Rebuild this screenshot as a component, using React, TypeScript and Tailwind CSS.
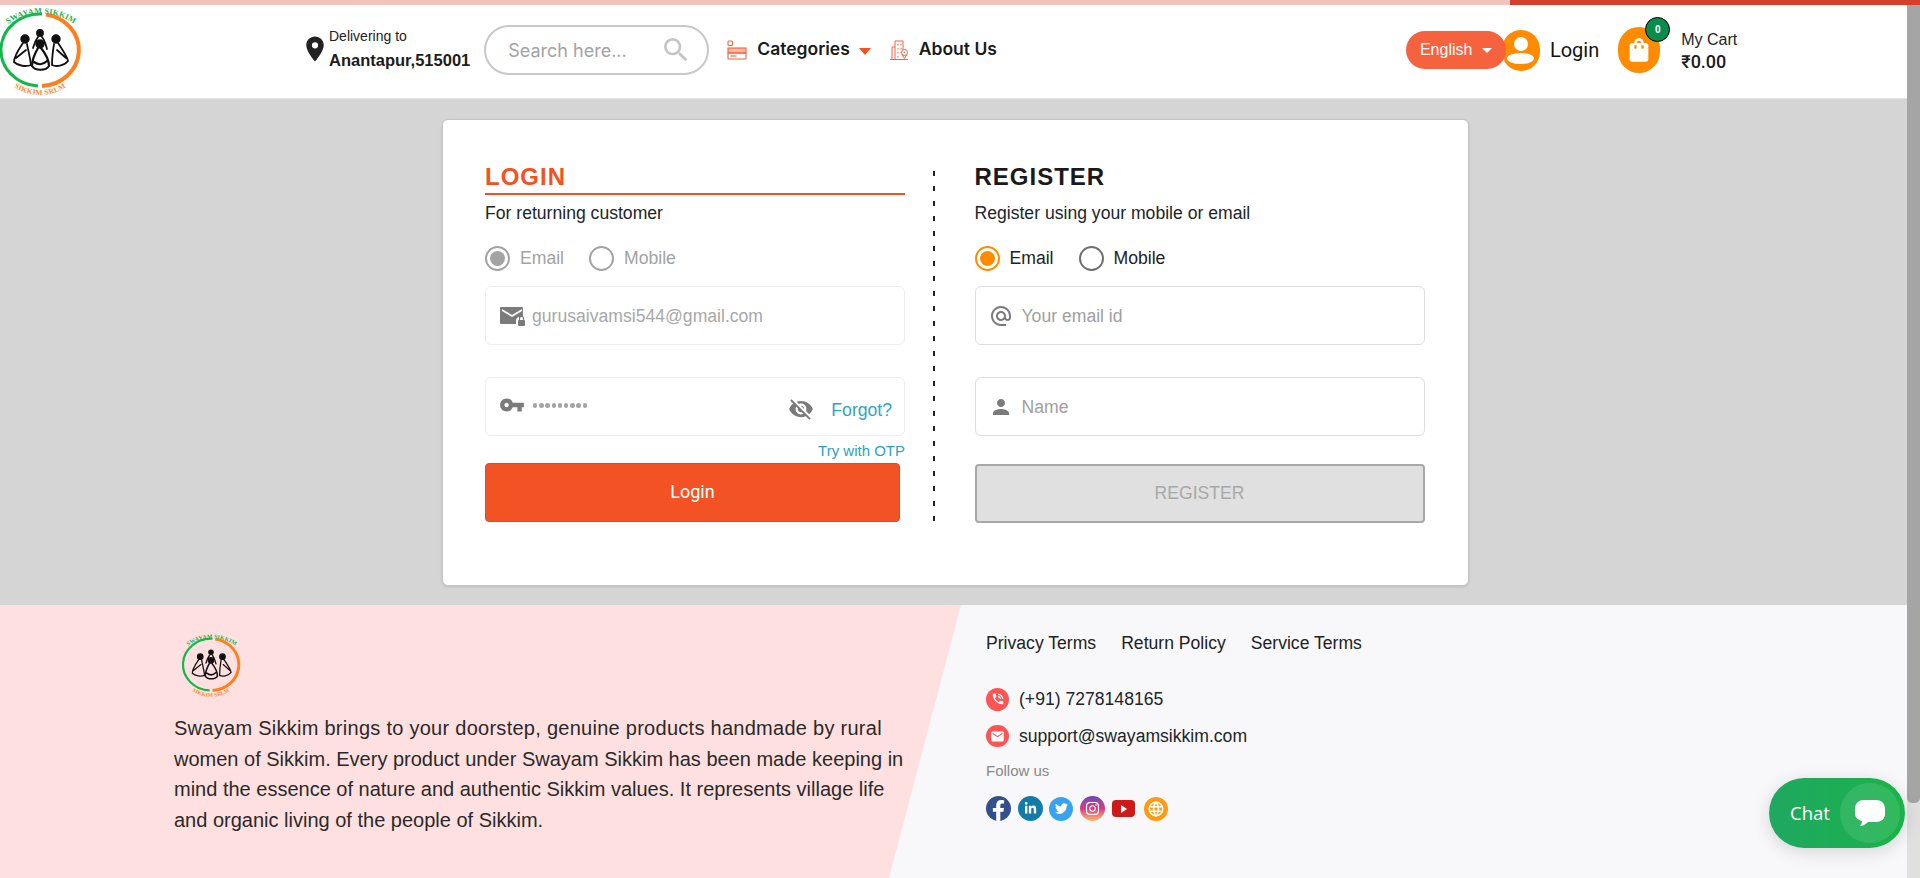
import React from "react";
import { MdLocationOn, MdSearch, MdVpnKey, MdVisibilityOff, MdAlternateEmail, MdPerson, MdShoppingBag, MdPhoneInTalk, MdEmail } from "react-icons/md";
import { FaFacebookF, FaLinkedinIn, FaTwitter, FaInstagram } from "react-icons/fa";
import { TbWorld } from "react-icons/tb";

const Logo = ({ className, id }: { className: string; id: string }) => (
	<svg viewBox="0 0 80 92" className={`overflow-visible ${className}`}>
		<defs>
			<path id={`${id}-top`} d="M4 21 A57 57 0 0 1 78 21" />
			<path id={`${id}-bottom`} d="M9 77 A46 46 0 0 0 71 77" />
		</defs>
		<path d="M42 8 A39 36 0 0 0 38 80" fill="none" stroke="#14b84a" strokeWidth="3" />
		<path d="M46 8.5 A39 36 0 0 1 42 80" fill="none" stroke="#ff7f1e" strokeWidth="4" />
		<text fontFamily="Liberation Serif, serif" fontSize="8" fontWeight="700" fill="#22b24c" letterSpacing="0.2" textAnchor="middle">
			<textPath href={`#${id}-top`} startOffset="50%">SWAYAM SIKKIM</textPath>
		</text>
		<text fontFamily="Liberation Serif, serif" fontSize="7.6" fontWeight="700" fill="#ff8a2a" letterSpacing="0.2" textAnchor="middle">
			<textPath href={`#${id}-bottom`} startOffset="50%">SIKKIM SRLM</textPath>
		</text>
		<g fill="none" stroke="#111" strokeWidth="1.8" strokeLinecap="round">
			<circle cx="25" cy="33" r="3.8" fill="#111" />
			<path d="M23 37 C19 43 14 50 14 56 C18 60 26 61 31 59 M27 38 C28 44 30 50 31 59 M16 52 L26 44" />
			<circle cx="40" cy="27" r="3" fill="#111" />
			<path d="M38 31 C35 35 34 39 33 42 M42 31 C45 35 46 39 47 43 M36 35 L44 37" />
			<circle cx="40" cy="38" r="3.8" fill="#111" />
			<path d="M38 42 C34 49 32 56 32 60 C35 65 46 65 49 60 C49 53 45 47 41 42 M34 56 C38 59 43 59 47 55" strokeWidth="2.2" />
			<circle cx="56" cy="33" r="3.8" fill="#111" />
			<path d="M58 37 C62 43 67 50 68 55 C64 60 56 61 52 59 M54 38 C53 44 52 50 52 59 M66 52 L57 44" />
		</g>
	</svg>
);

const CategoriesIcon = () => (
	<svg viewBox="0 0 20 20" className="w-5 h-5" fill="none" stroke="#f4623c" strokeWidth="1.1">
		<rect x="1" y="1" width="4.5" height="4.5" rx="1" />
		<rect x="1" y="8" width="18" height="5" fill="#fbb9a6" />
		<rect x="1" y="13" width="18" height="6" rx="0.5" />
		<path d="M3.5 16h6" />
	</svg>
);

const AboutIcon = () => (
	<svg viewBox="0 0 20 20" className="w-5 h-5" fill="none" stroke="#f4623c" strokeWidth="1">
		<path d="M3 19V7h3V1h8v9M1 19.5h18M6 7v12M9 4v1.5M12 4v1.5M9 8v1.5M12 8v1.5M9 12v1.5M9 16v1.5M12 12v1" />
		<circle cx="15.5" cy="12.5" r="3" />
		<path d="M13 14.5l2.5 4 2.5-4" />
		<circle cx="15.5" cy="12.5" r="0.8" fill="#f4623c" stroke="none" />
	</svg>
);

const MailLockIcon = () => (
	<svg viewBox="0 0 25 20" className="w-[25px] h-5">
		<path d="M1 1h21a1 1 0 0 1 1 1v9h-3a4 4 0 0 0-4 4v3H1a1 1 0 0 1-1-1V2a1 1 0 0 1 1-1z" fill="#7b7b7b" />
		<path d="M2 4l10 6 10-6" fill="none" stroke="#fff" strokeWidth="1.6" />
		<rect x="18" y="14" width="7" height="6" rx="1" fill="#7b7b7b" />
		<path d="M19.5 14v-1.5a2 2 0 0 1 4 0V14" fill="none" stroke="#7b7b7b" strokeWidth="1.2" />
	</svg>
);

const Radio = ({ label, checked, color, text, ring }: { label: string; checked?: boolean; color?: string; text: string; ring: string }) => (
	<div className="flex items-center gap-[10px]">
		<span className={`w-[25px] h-[25px] rounded-full border-2 flex items-center justify-center ${ring}`}>
			{checked && <span className={`w-[15px] h-[15px] rounded-full ${color}`} />}
		</span>
		<span className={`text-[17.6px] ${text}`}>{label}</span>
	</div>
);

const App = () => {
	return (
		<div className="h-screen overflow-hidden flex flex-col font-['Liberation_Sans',Arial,sans-serif] text-[#212529]">
			<div className="h-[5px] flex shrink-0">
				<div className="w-[1510px] bg-[#f3c4bd]" />
				<div className="flex-1 bg-[#d63f2b]" />
			</div>
			<div className="flex-1 flex min-h-0">
				<div className="flex-1 min-w-0 relative">
					{/* Header */}
					<header className="h-[94px] pb-[3px] bg-white border-b border-[#e4e4e4] flex items-center relative">
						<Logo id="head" className="w-[80px] h-[92px] shrink-0 mt-[3px]" />
						<MdLocationOn className="ml-[220px] w-[30px] h-[30px] text-[#222] -mt-[2px] shrink-0" />
						<div className="ml-[-1px] leading-none -mt-[3px]">
							<div className="text-[14px] mb-[9px] text-[#222]">Delivering to</div>
							<div className="text-[16.5px] font-bold text-[#1c1c1c]">Anantapur,515001</div>
						</div>
						<div className="ml-[14px] w-[225px] h-[50px] rounded-full border-2 border-[#c8c8c8] flex items-center justify-between pl-[22px] pr-[18px]">
							<span className="font-['Inter',sans-serif] text-[18px] text-[#a3a3a3]">Search here...</span>
							<MdSearch className="w-[32px] h-[32px] text-[#c4c4c4] -mr-[3px]" />
						</div>
						<div className="ml-[18px]"><CategoriesIcon /></div>
						<span className="ml-[10px] -mt-[2px] font-['Inter',sans-serif] font-semibold text-[17.5px] text-[#1a1a1a]">Categories</span>
						<span className="ml-[9px] mt-[2px] w-0 h-0 border-x-[6px] border-x-transparent border-t-[7px] border-t-[#f4511e]" />
						<div className="ml-[18px]"><AboutIcon /></div>
						<span className="ml-[10px] -mt-[2px] font-['Inter',sans-serif] font-semibold text-[17.5px] text-[#1a1a1a]">About Us</span>
						<div className="ml-[409px] relative z-10 w-[100px] h-[38px] rounded-full bg-[#f7623e] flex items-center pl-[14px] text-white text-[16px]">
							English
							<span className="ml-[10px] w-0 h-0 border-x-[5px] border-x-transparent border-t-[5px] border-t-white" />
						</div>
						<div className="-ml-[4px] w-[38px] h-[41px] rounded-full bg-[#ff8c00] flex flex-col items-center justify-center gap-[2px] overflow-hidden">
							<span className="w-[14px] h-[14px] rounded-full bg-white" />
							<span className="w-[27px] h-[11px] rounded-[50%] bg-white" />
						</div>
						<span className="ml-[10px] text-[20px] text-[#111] font-['Roboto',sans-serif]">Login</span>
						<div className="ml-[19px] relative w-[42px] h-[46px] rounded-full bg-[#ff8c00] flex items-center justify-center">
							<MdShoppingBag className="w-[28px] h-[28px] text-white" />
							<span className="absolute -top-[10px] left-[27px] w-[25px] h-[25px] rounded-full bg-[#0b8c4c] border border-black text-white text-[10px] font-bold flex items-center justify-center">0</span>
						</div>
						<div className="ml-[21px] leading-none mt-[2px]">
							<div className="text-[16px] mb-[5px]">My Cart</div>
							<div className="text-[18px] font-medium font-['Roboto',sans-serif] text-[#1c1c1c]">₹0.00</div>
						</div>
					</header>

					{/* Login / register card */}
					<main className="h-[506px] bg-[#d5d5d5] pt-[20px] pl-[442px]">
						<div className="w-[1027px] h-[467px] bg-white rounded-[6px] border border-[#c4c4c4] shadow-sm pt-[38px] pl-[42px] flex">
							<section className="w-[420px] shrink-0">
								<h2 className="text-[24px] leading-[38px] font-bold tracking-[1px] text-[#f4511e] border-b-2 border-[#f4511e] h-[37px]">LOGIN</h2>
								<p className="text-[17.6px] leading-[24px] mt-[6px]">For returning customer</p>
								<div className="flex gap-[25px] mt-[20px]">
									<Radio label="Email" checked color="bg-[#a3a3a3]" ring="border-[#a3a3a3]" text="text-[#a3a3a3]" />
									<Radio label="Mobile" ring="border-[#a3a3a3]" text="text-[#a3a3a3]" />
								</div>
								<div className="mt-[15px] h-[59px] rounded-[6px] border border-[#eeeeee] flex items-center pl-[14px]">
									<MailLockIcon />
									<span className="ml-[7px] text-[17.6px] text-[#a8a8a8]">gurusaivamsi544@gmail.com</span>
								</div>
								<div className="mt-[32px] h-[59px] rounded-[6px] border border-[#eeeeee] flex items-center pl-[13px] pr-[12px]">
									<MdVpnKey className="w-[26px] h-[26px] text-[#7b7b7b] -mt-[3px]" />
									<span className="ml-[8px] flex gap-[1.8px] -mt-[3px]">
										{Array.from({ length: 9 }).map((_, i) => (
											<span key={i} className="w-[4.4px] h-[4.4px] rounded-full bg-[#a3a3a3]" />
										))}
									</span>
									<MdVisibilityOff className="ml-auto w-[26px] h-[26px] text-[#7b7b7b] mt-[5px]" />
									<span className="ml-[17px] text-[17.6px] text-[#2fa5c4] mt-[7px]">Forgot?</span>
								</div>
								<div className="text-right text-[15px] leading-[20px] text-[#2f9fbe] mt-[5px]">Try with OTP</div>
								<button className="mt-[2px] w-[415px] h-[59px] pb-[2px] rounded-[4px] bg-[#f35225] border border-[#c0563a] text-white text-[18px] font-['Roboto',sans-serif]">Login</button>
							</section>

							<div className="ml-[28px] mt-[13px] w-[1.5px] h-[350px] shrink-0 bg-[repeating-linear-gradient(to_bottom,#222_0,#222_5px,transparent_5px,transparent_15px)]" />

							<section className="ml-[40px] w-[450px] shrink-0">
								<h2 className="text-[24px] leading-[38px] font-bold tracking-[1px] text-[#1a1a1a] h-[37px]">REGISTER</h2>
								<p className="text-[17.6px] leading-[24px] mt-[6px]">Register using your mobile or email</p>
								<div className="flex gap-[25px] mt-[20px]">
									<Radio label="Email" checked color="bg-[#ff8c00]" ring="border-[#ff8c00]" text="text-[#222]" />
									<Radio label="Mobile" ring="border-[#6f6f6f]" text="text-[#222]" />
								</div>
								<div className="mt-[15px] h-[59px] rounded-[6px] border border-[#dedede] flex items-center pl-[13px]">
									<MdAlternateEmail className="w-[24px] h-[24px] text-[#7b7b7b]" />
									<span className="ml-[9px] text-[17.6px] text-[#a0a0a0]">Your email id</span>
								</div>
								<div className="mt-[32px] h-[59px] rounded-[6px] border border-[#dedede] flex items-center pl-[13px]">
									<MdPerson className="w-[24px] h-[24px] text-[#7b7b7b]" />
									<span className="ml-[9px] text-[17.6px] text-[#a0a0a0]">Name</span>
								</div>
								<button className="mt-[28px] w-[450px] h-[59px] pb-[2px] rounded-[4px] bg-[#e0e0e0] border-2 border-[#a8a8a8] text-[#a8a8a8] text-[17.6px]">REGISTER</button>
							</section>
						</div>
					</main>

					{/* Footer */}
					<footer className="h-[273px] bg-[#f8f8fb] relative flex">
						<div className="absolute inset-y-0 left-0 w-[961px] bg-[#ffe0e0] [clip-path:polygon(0_0,100%_0,889px_100%,0_100%)]" />
						<div className="relative w-[986px] shrink-0 pl-[174px] pt-[28px]">
							<Logo id="foot" className="w-[58px] h-[66px] ml-[8px]" />
							<p className="mt-[14px] w-[740px] text-[20px] leading-[30.6px] text-[#2a2a2a]">
								<span className="tracking-[0.27px]">Swayam Sikkim brings to your doorstep, genuine products handmade by rural</span> women of Sikkim. Every product under Swayam Sikkim has been made keeping in mind the essence of nature and authentic Sikkim values. It represents village life and organic living of the people of Sikkim.
							</p>
						</div>
						<div className="relative pt-[27px]">
							<div className="flex gap-[25px] text-[17.6px] leading-[22px] text-[#222]">
								<span>Privacy Terms</span>
								<span>Return Policy</span>
								<span>Service Terms</span>
							</div>
							<div className="mt-[33px] flex items-center gap-[10px] text-[17.6px] leading-[24px]">
								<span className="w-[23px] h-[23px] rounded-full bg-[#ff5454] flex items-center justify-center"><MdPhoneInTalk className="w-[14px] h-[14px] text-white" /></span>
								(+91) 7278148165
							</div>
							<div className="mt-[13px] flex items-center gap-[10px] text-[17.6px] leading-[24px]">
								<span className="w-[23px] h-[22px] rounded-full bg-[#ff5454] flex items-center justify-center"><MdEmail className="w-[15px] h-[15px] text-white" /></span>
								support@swayamsikkim.com
							</div>
							<div className="mt-[13px] text-[15px] leading-[20px] text-[#888]">Follow us</div>
							<div className="mt-[15px] flex items-center gap-[6.5px]">
								<span className="w-[25px] h-[25px] rounded-full bg-[#34508a] flex items-end justify-center overflow-hidden"><FaFacebookF className="w-[19px] h-[21px] text-white" /></span>
								<span className="w-[25px] h-[25px] rounded-full bg-[#137ba8] flex items-center justify-center"><FaLinkedinIn className="w-[13px] h-[13px] text-white" /></span>
								<span className="w-[24px] h-[24px] rounded-full bg-[#3aa3ef] flex items-center justify-center"><FaTwitter className="w-[13px] h-[13px] text-white" /></span>
								<span className="w-[25px] h-[25px] rounded-full bg-gradient-to-b from-[#6a3fc0] via-[#d9357e] to-[#fbb66a] flex items-center justify-center"><FaInstagram className="w-[15px] h-[15px] text-white" /></span>
								<span className="w-[23px] h-[17px] ml-[1px] rounded-[4px] bg-[#cf1a1a] flex items-center justify-center"><span className="w-0 h-0 border-y-[4px] border-y-transparent border-l-[6px] border-l-white" /></span>
								<span className="w-[24px] h-[24px] ml-[2px] rounded-full bg-[#ff9a15] flex items-center justify-center"><TbWorld className="w-[18px] h-[18px] text-white" /></span>
							</div>
						</div>
					</footer>

					{/* Chat button */}
					<div className="absolute left-[1769px] top-[773px] w-[136px] h-[70px] rounded-full bg-gradient-to-r from-[#1fa860] to-[#1bb249] shadow-[0_4px_18px_rgba(0,0,0,0.14)] flex items-center pl-[21px]">
						<span className="font-['Open_Sans',sans-serif] text-[18.5px] text-white">Chat</span>
						<span className="absolute right-[5px] top-[5px] w-[60px] h-[60px] rounded-full bg-white/10 flex items-center justify-center">
							<svg viewBox="0 0 30 28" className="w-[30px] h-[28px]">
								<path d="M9 1h12c5 0 9 3 9 9v5c0 5-4 8-9 8H13c-2 2-5 4-8 4 1-1 2-3 2-5-4-1-7-4-7-7v-5C0 4 4 1 9 1z" fill="#fff" />
							</svg>
						</span>
					</div>
				</div>

				{/* Scrollbar */}
				<div className="w-[13px] shrink-0 bg-[#e0e0e0]">
					<div className="h-[798px] bg-[#a5a5a5] rounded-b-[5px]" />
				</div>
			</div>
		</div>
	);
};

export default App;
